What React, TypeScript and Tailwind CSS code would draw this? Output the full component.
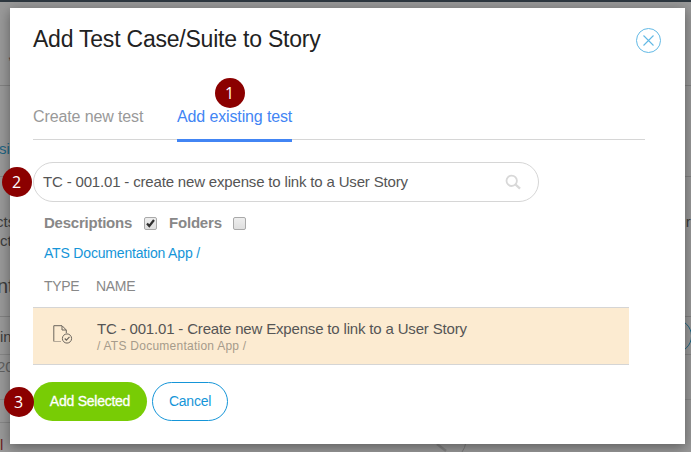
import type { ReactNode } from "react";

function StepBadge({ children, className }: { children: ReactNode; className: string }) {
  return (
    <span
      className={`absolute z-10 flex h-[30px] w-[30px] items-center justify-center rounded-full bg-[#8b0000] font-['Open_Sans',sans-serif] text-[16px] leading-none text-white ${className}`}
    >
      {children}
    </span>
  );
}

function Backdrop() {
  return (
    <div className="flex h-full flex-col overflow-hidden whitespace-nowrap bg-[#999] text-[15px] leading-[19px] text-[#3d3d3d]">
      <div className="h-[2px] shrink-0 bg-[#2d373f]" />
      <div className="h-[84px] shrink-0 border-b border-[#828282] pt-[47px]">
        <span className="ml-[8px] block text-[12px] leading-[12px] text-[#6b4a3c]">,</span>
      </div>
      <div className="h-[91px] shrink-0 border-b border-[#828282] pt-[53px] text-[#1f6583]">
        <span className="-ml-px">si</span>
      </div>
      <div className="flex h-[140px] shrink-0 flex-col border-b border-[#828282] pt-[35px]">
        <div className="flex justify-between">
          <span className="-ml-[4px]">cts</span>
          <span className="-mr-[3px]">ri</span>
        </div>
        <span>ct</span>
        <span className="-ml-[3px] mt-[24px] text-[20px] leading-[24px]">nt</span>
      </div>
      <div className="flex h-[38px] shrink-0 justify-between border-b border-[#868686] pt-[2px]">
        <span className="pt-[8px]">in</span>
        <span className="-mr-px h-[34px] w-[34px] rounded-full border border-[#1f6583]" />
      </div>
      <div className="h-[45px] shrink-0 border-b border-[#8a8a8a] pt-[2px] text-[#626262]">
        <span className="-ml-[3px]">20</span>
      </div>
      <div className="h-[23px] w-[10px] shrink-0 border-b border-[#868686]" />
      <div className="flex h-[29px] shrink-0 pt-[12px]">
        <span className="w-[432px] text-[#6d2020]">l</span>
        <svg className="h-[17px] w-[36px]" viewBox="0 0 36 17" fill="none">
          <path d="M5 9L14 16" stroke="#828282" strokeWidth="2.4" />
          <path d="M34 7Q33 13 30 17" stroke="#7b7b7b" />
        </svg>
      </div>
    </div>
  );
}

function Checkbox({ checked = false }: { checked?: boolean }) {
  return (
    <svg className="h-[13px] w-[13px]" viewBox="0 0 13 13" role="img" fill="none">
      <defs>
        <linearGradient id="box" x1="0" y1="0" x2="0" y2="1">
          <stop stopColor="#eeeeee" />
          <stop offset="1" stopColor="#dedede" />
        </linearGradient>
      </defs>
      <rect x=".5" y=".5" width="12" height="12" rx="1.5" fill="url(#box)" stroke="#a9a9a9" />
      {checked && <path d="M3 6.4L5.3 9L10 3" stroke="#303030" strokeWidth="2.2" />}
    </svg>
  );
}

function DocumentIcon() {
  return (
    <svg className="h-[20px] w-[20px]" viewBox="0 0 20 20" fill="none" stroke="#6b655d">
      <path d="M.8 16.5V.7H9L13.3 5V8" />
      <path d="M9 1V5H13" />
      <path d="M1 16.5H8" stroke="#b5aa9a" />
      <circle cx="14" cy="13.5" r="4.6" />
      <path d="M11.7 13.5L13.4 15.2L16.5 11.8" strokeWidth="1.2" />
    </svg>
  );
}

export default function App() {
  return (
    <div className="relative h-[452px] w-[691px] overflow-hidden font-['Liberation_Sans',Arial,sans-serif]">
      <Backdrop />
      <main className="absolute left-[10px] top-[8px] flex h-[436px] w-[675px] flex-col bg-white px-[23px] whitespace-nowrap shadow-[0_3px_12px_rgba(0,0,0,0.4)]">
        <header className="flex h-[91px] shrink-0 items-start justify-between">
          <h1 className="mt-[16px] text-[23px] leading-[30px] tracking-[-0.22px] text-[#222]">
            Add Test Case/Suite to Story
          </h1>
          <button aria-label="Close" className="mr-px mt-[20px]">
            <svg className="h-[25px] w-[25px]" viewBox="0 0 25 25" fill="none" stroke="#62b9e5">
              <circle cx="12.5" cy="12.5" r="12" />
              <path d="M7.5 7.5L17.5 17.5M17.5 7.5L7.5 17.5" strokeWidth="1.1" />
            </svg>
          </button>
        </header>

        <nav className="flex h-[41px] w-[612px] shrink-0 gap-[34px] border-b border-[#d6d6d6] text-[16px] leading-[20px]">
          <button className="h-[41px] w-[110px] pb-[5px] text-left tracking-[-0.12px] text-[#999]">Create new test</button>
          <button className="h-[43px] w-[115px] border-b-[3px] border-[#4285f4] pb-[4px] text-left tracking-[-0.13px] text-[#4285f4]">
            Add existing test
          </button>
        </nav>

        <div className="mt-[22px] flex h-[40px] w-[506px] shrink-0 items-center justify-between rounded-full border border-[#d6d6d6] pl-[9px] pr-[17px] text-[15px] text-[#555]">
          <span className="tracking-[-0.17px]">TC - 001.01 - create new expense to link to a User Story</span>
          <svg className="h-[16px] w-[16px]" viewBox="0 0 16 16" fill="none" stroke="#d8d8d8">
            <circle cx="6.7" cy="6.8" r="5.2" strokeWidth="1.8" />
            <path d="M10.5 10.5L15 14.7" strokeWidth="2.3" />
          </svg>
        </div>

        <div className="ml-[11px] mt-[11px] flex h-[20px] shrink-0 items-center text-[15px] font-bold text-[#888]">
          <span className="w-[100px] tracking-[-0.23px]">Descriptions</span>
          <Checkbox checked />
          <span className="ml-[12px] w-[64px] tracking-[-0.2px]">Folders</span>
          <Checkbox />
        </div>
        <a className="ml-[11px] mt-[10px] h-[20px] shrink-0 text-[14px] leading-[20px] tracking-[-0.18px] text-[#1595d8]">
          ATS Documentation App /
        </a>
        <div className="ml-[11px] mt-[13px] flex h-[20px] shrink-0 text-[14px] leading-[20px] tracking-[-0.3px] text-[#888]">
          <span className="w-[52px]">TYPE</span>
          <span>NAME</span>
        </div>

        <section className="mt-[11px] flex h-[58px] w-[596px] shrink-0 border-y border-[#d5d5d5] bg-[#fcebd1] pl-[20px]">
          <div className="w-[44px] pt-[17px]">
            <DocumentIcon />
          </div>
          <div className="pt-[11px]">
            <div className="text-[15px] leading-[19px] tracking-[-0.17px] text-[#555]">
              TC - 001.01 - Create new Expense to link to a User Story
            </div>
            <div className="text-[12px] leading-[16px] tracking-[0.25px] text-[#a69b8b]">/ ATS Documentation App /</div>
          </div>
        </section>

        <footer className="mt-[17px] flex h-[39px] shrink-0 gap-[5px] text-[14px] tracking-[-0.25px]">
          <button className="w-[114px] rounded-full bg-[#78cc05] text-white [-webkit-text-stroke:0.3px_white]">Add Selected</button>
          <button className="w-[76px] rounded-full border border-[#1595d8] text-[#1595d8]">Cancel</button>
        </footer>
      </main>
      <StepBadge className="left-[214.5px] top-[77.5px]">1</StepBadge>
      <StepBadge className="left-[1.5px] top-[166.5px]">2</StepBadge>
      <StepBadge className="left-[3.5px] top-[386.5px]">3</StepBadge>
    </div>
  );
}
